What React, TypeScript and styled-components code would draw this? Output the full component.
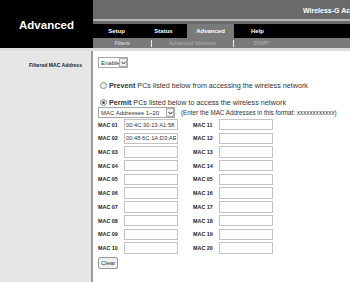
import React, { useState } from "react";
import styled, { createGlobalStyle } from "styled-components";

const GlobalStyle = createGlobalStyle`
  html, body {
    margin: 0;
    padding: 0;
    background: #ffffff;
  }
  body {
    font-family: "Liberation Sans", Arial, sans-serif;
  }
`;

const Page = styled.div`
  width: 350px;
  height: 282px;
  overflow: hidden;
  display: flex;
  flex-direction: column;
  background: #ffffff;
`;

const Header = styled.div`
  display: grid;
  grid-template-columns: 93px 1fr;
  height: 48px;
`;

const Brand = styled.div`
  background: #000000;
  color: #ffffff;
  font-weight: bold;
  font-size: 11.5px;
  display: flex;
  align-items: center;
  justify-content: center;
  padding-top: 2px;
`;

const HeaderRight = styled.div`
  display: flex;
  flex-direction: column;
  min-width: 0;
`;

const TitleBar = styled.div`
  height: 19px;
  background: #6a6a6a;
  color: #ffffff;
  font-weight: bold;
  font-size: 7px;
  white-space: nowrap;
  overflow: hidden;
  padding-left: 210px;
  line-height: 22px;
`;

const Rule = styled.div<{ $color: string; $h: number }>`
  height: ${(p) => p.$h}px;
  background: ${(p) => p.$color};
`;

const TabBar = styled.div`
  height: 14px;
  background: #000000;
  display: flex;
`;

const Tab = styled.div<{ $active?: boolean }>`
  width: 47px;
  display: flex;
  align-items: center;
  justify-content: center;
  font-size: 6px;
  font-weight: bold;
  color: #ffffff;
  background: ${(p) => (p.$active ? "#7a7a7a" : "transparent")};
`;

const SubNav = styled.div`
  height: 10px;
  background: #7a7a7a;
  display: flex;
  align-items: center;
  font-size: 5.5px;
`;

const SubItem = styled.span<{ $w: number; $current?: boolean }>`
  width: ${(p) => p.$w}px;
  text-align: center;
  color: ${(p) => (p.$current ? "#e4e4e4" : "#b0b0b0")};
`;

const SubSep = styled.span`
  width: 1px;
  height: 7px;
  background: #f0f0f0;
`;

const Strip = styled.div`
  height: 3px;
  background: #dcdcdc;
`;

const Body = styled.div`
  flex: 1;
  display: grid;
  grid-template-columns: 91px 2px 1fr;
`;

const Sidebar = styled.div`
  background: #e6e6e6;
  display: flex;
  justify-content: flex-end;
  padding: 9px 9px 0 0;
`;

const Divider = styled.div`
  background: #9a9a9a;
`;

const SideLabel = styled.div`
  font-size: 5.1px;
  font-weight: bold;
  color: #222222;
  line-height: 10px;
`;

const Content = styled.div`
  padding: 6px 0 0 5px;
  display: flex;
  flex-direction: column;
  align-items: flex-start;
  font-size: 6px;
  color: #333333;
`;

const SelectWrap = styled.div<{ $w: number }>`
  position: relative;
  width: ${(p) => p.$w}px;
  height: 11px;
  flex-shrink: 0;
`;

const Select = styled.select`
  appearance: none;
  -webkit-appearance: none;
  display: block;
  width: 100%;
  height: 100%;
  margin: 0;
  padding: 0 0 0 2px;
  border: 1px solid #a8a8a8;
  border-radius: 0;
  background: #ffffff;
  font-family: "Liberation Sans", Arial, sans-serif;
  font-size: 6px;
  color: #333333;
  outline: none;
`;

const Arrow = styled.span`
  position: absolute;
  right: 1px;
  top: 1px;
  width: 8px;
  height: 9px;
  border: 1px solid #b0b0b0;
  box-sizing: border-box;
  background: #eeeeee;
  display: flex;
  align-items: center;
  justify-content: center;
  pointer-events: none;
`;

const RadioRow = styled.label<{ $gap: number }>`
  display: flex;
  align-items: center;
  gap: 2px;
  height: 10px;
  margin-top: ${(p) => p.$gap}px;
  padding-left: 2px;
  font-size: 7.2px;
  color: #333333;
  white-space: nowrap;
`;

const Radio = styled.input`
  appearance: none;
  -webkit-appearance: none;
  margin: 0;
  width: 7px;
  height: 7px;
  border-radius: 50%;
  border: 1px solid #8c8c8c;
  background: #f4f4f4;
  display: grid;
  place-items: center;
  &:checked::after {
    content: "";
    width: 3px;
    height: 3px;
    border-radius: 50%;
    background: #555555;
  }
`;

const FormatRow = styled.div`
  display: flex;
  align-items: center;
  gap: 6px;
  font-size: 6.3px;
  color: #333333;
  white-space: nowrap;
`;

const MacGrid = styled.div`
  display: grid;
  grid-template-columns: repeat(2, auto);
  column-gap: 15px;
  row-gap: 2.3px;
  margin-top: 1px;
`;

const MacCell = styled.div`
  display: flex;
  align-items: center;
  gap: 2px;
`;

const MacLabel = styled.span`
  width: 24px;
  font-size: 5.4px;
  font-weight: bold;
  color: #222222;
`;

const MacInput = styled.input`
  width: 54px;
  height: 11.4px;
  box-sizing: border-box;
  margin: 0;
  padding: 0 1px;
  border: 1px solid #c2c2c2;
  font-family: "Liberation Sans", Arial, sans-serif;
  font-size: 5.8px;
  color: #333333;
  outline: none;
`;

const ClearButton = styled.button`
  margin-top: 3px;
  height: 12px;
  padding: 0 2px;
  border: 1px solid #9a9a9a;
  border-radius: 2px;
  background: #f0f0f0;
  font-family: "Liberation Sans", Arial, sans-serif;
  font-size: 6px;
  color: #333333;
`;

const ArrowIcon = () => (
  <svg width="5" height="4" viewBox="0 0 5 4">
    <path d="M0.5 0.8 L2.5 3 L4.5 0.8" fill="none" stroke="#333" strokeWidth="1" />
  </svg>
);

const leftLabels = ["01", "02", "03", "04", "05", "06", "07", "08", "09", "10"];
const rightLabels = ["11", "12", "13", "14", "05", "16", "17", "18", "19", "20"];

const App = () => {
  const [mode, setMode] = useState("permit");
  const [values, setValues] = useState<Record<string, string>>({
    L01: "00:4C:30:13:A1:58",
    L02: "00:48:6C:1A:D3:AE",
  });

  const cells: { key: string; label: string }[] = [];
  leftLabels.forEach((l, i) => {
    cells.push({ key: "L" + l, label: l });
    cells.push({ key: "R" + rightLabels[i] + i, label: rightLabels[i] });
  });

  return (
    <Page>
      <GlobalStyle />
      <Header>
        <Brand>Advanced</Brand>
        <HeaderRight>
          <TitleBar>Wireless-G Access Point</TitleBar>
          <Rule $color="#b4b4b4" $h={2} />
          <Rule $color="#6a6a6a" $h={3} />
          <TabBar>
            <Tab>Setup</Tab>
            <Tab>Status</Tab>
            <Tab $active>Advanced</Tab>
            <Tab>Help</Tab>
          </TabBar>
          <SubNav>
            <SubItem $w={58} $current>Filters</SubItem>
            <SubSep />
            <SubItem $w={81}>Advanced Wireless</SubItem>
            <SubSep />
            <SubItem $w={54}>SNMP</SubItem>
          </SubNav>
        </HeaderRight>
      </Header>
      <Strip />
      <Body>
        <Sidebar>
          <SideLabel>Filtered MAC Address</SideLabel>
        </Sidebar>
        <Divider />
        <Content>
          <SelectWrap $w={30}>
            <Select defaultValue="enable">
              <option value="enable">Enable</option>
              <option value="disable">Disable</option>
            </Select>
            <Arrow>
              <ArrowIcon />
            </Arrow>
          </SelectWrap>
          <RadioRow $gap={12}>
            <Radio
              type="radio"
              name="mode"
              checked={mode === "prevent"}
              onChange={() => setMode("prevent")}
            />
            <span>
              <b>Prevent</b> PCs listed below from accessing the wireless network
            </span>
          </RadioRow>
          <RadioRow $gap={7}>
            <Radio
              type="radio"
              name="mode"
              checked={mode === "permit"}
              onChange={() => setMode("permit")}
            />
            <span>
              <b>Permit</b> PCs listed below to access the wireless network
            </span>
          </RadioRow>
          <FormatRow>
            <SelectWrap $w={77}>
              <Select defaultValue="1">
                <option value="1">MAC Addresses 1~20</option>
                <option value="2">MAC Addresses 21~40</option>
              </Select>
              <Arrow>
                <ArrowIcon />
              </Arrow>
            </SelectWrap>
            <span>(Enter the MAC Addresses in this format: xxxxxxxxxxxx)</span>
          </FormatRow>
          <MacGrid>
            {cells.map((c) => (
              <MacCell key={c.key}>
                <MacLabel>MAC {c.label}</MacLabel>
                <MacInput
                  value={values[c.key] || ""}
                  onChange={(e) => setValues({ ...values, [c.key]: e.target.value })}
                />
              </MacCell>
            ))}
          </MacGrid>
          <ClearButton>Clear</ClearButton>
        </Content>
      </Body>
    </Page>
  );
};

export default App;
